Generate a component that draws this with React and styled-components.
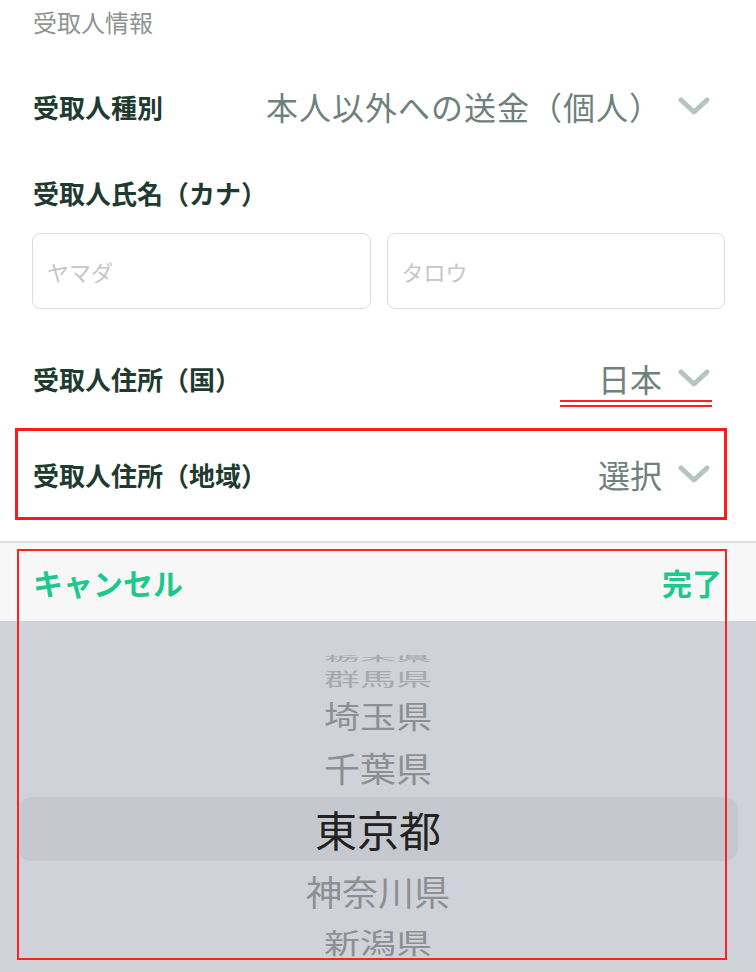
import React from 'react';
import styled, { createGlobalStyle } from 'styled-components';

const GlobalStyle = createGlobalStyle`
  html, body {
    margin: 0;
    padding: 0;
    background: #ffffff;
  }
  body {
    font-family: "Noto Sans CJK JP", "Noto Sans", sans-serif;
  }
`;

const Page = styled.div`
  width: 756px;
  height: 972px;
  overflow: hidden;
  display: flex;
  flex-direction: column;
  background: #ffffff;
`;

// ヘッダー
const SectionTitle = styled.div`
  height: 42px;
  padding-left: 33px;
  display: flex;
  align-items: center;
  font-size: 24px;
  color: #8c9491;
`;

// 行（ラベル + 値）
const Row = styled.div`
  height: ${p => p.$h || 76}px;
  margin: ${p => p.$margin || '0'};
  padding: 0 ${p => (p.$boxed ? 14 : 46)}px 0 ${p => (p.$boxed ? 15 : 33)}px;
  display: flex;
  align-items: center;
  justify-content: space-between;
  border: ${p => (p.$boxed ? '3px solid #ff1a1a' : 'none')};
  box-sizing: border-box;
`;

const Label = styled.div`
  font-size: 26px;
  font-weight: 700;
  color: #1f3b30;
`;

const ValueGroup = styled.div`
  position: relative;
  display: flex;
  align-items: center;
  gap: 16px;
  padding-left: ${p => p.$pad || 0}px;

  ${p => p.$marked && `
    &::after {
      content: '';
      position: absolute;
      left: 0;
      right: -2px;
      bottom: -6px;
      height: 7px;
      border-top: 2px solid #ff2020;
      border-bottom: 2px solid #ff2020;
      box-sizing: border-box;
    }
  `}
`;

const Value = styled.span`
  font-size: 32px;
  color: #6f817c;
  letter-spacing: ${p => p.$spacing || 0}px;
`;

const NameLabel = styled.div`
  height: 44px;
  margin-top: 26px;
  padding-left: 33px;
  display: flex;
  align-items: center;
`;

const InputRow = styled.div`
  margin: 19px 31px 0 32px;
  display: grid;
  grid-template-columns: 1fr 1fr;
  gap: 16px;
`;

const TextInput = styled.input`
  height: 76px;
  box-sizing: border-box;
  border: 1.5px solid #dcdcdc;
  border-radius: 8px;
  padding: 0 14px;
  font-family: "Noto Sans CJK JP", sans-serif;
  font-size: 22px;
  outline: none;

  &::placeholder {
    color: #c6c6c6;
  }
`;

// ピッカー
const Sheet = styled.div`
  position: relative;
  margin-top: 21px;
  border-top: 2px solid #dcdcdc;
  display: flex;
  flex-direction: column;
  flex: 1;
`;

const Toolbar = styled.div`
  height: 78px;
  background: #f7f7f7;
  padding: 0 34px 0 33px;
  display: flex;
  align-items: center;
  justify-content: space-between;
`;

const ToolButton = styled.span`
  font-size: 30px;
  font-weight: 700;
  color: #1cc98c;
`;

const Wheel = styled.div`
  flex: 1;
  background: #cfd2d9;
  padding-top: 32px;
  display: flex;
  flex-direction: column;
`;

const WheelItem = styled.div`
  height: ${p => p.$h}px;
  margin: 0 ${p => (p.$selected ? 18 : 0)}px;
  border-radius: 14px;
  background: ${p => (p.$selected ? '#c5c8cf' : 'transparent')};
  display: flex;
  align-items: center;
  justify-content: center;
  overflow: visible;
`;

const WheelText = styled.span`
  display: inline-block;
  font-size: ${p => (p.$selected ? 42 : 36)}px;
  line-height: 1;
  color: ${p => (p.$selected ? '#222222' : p.$fade ? '#a7a9ad' : '#8d8f93')};
  transform: scaleY(${p => p.$scale});
`;

const Annotation = styled.div`
  position: absolute;
  top: 6px;
  left: 17px;
  width: 710px;
  height: 411px;
  border: 2px solid #ff2020;
  box-sizing: border-box;
  pointer-events: none;
`;

const Chevron = () => (
  <svg width="32" height="20" viewBox="0 0 32 20">
    <path d="M3 4 L16 16 L29 4" fill="none" stroke="#b5c5c0" strokeWidth="5" strokeLinecap="round" strokeLinejoin="round" />
  </svg>
);

const prefectures = [
  { name: '栃木県', h: 10, scale: 0.2, fade: true },
  { name: '群馬県', h: 30, scale: 0.52, fade: true },
  { name: '埼玉県', h: 44, scale: 0.84 },
  { name: '千葉県', h: 60, scale: 0.95 },
  { name: '東京都', h: 64, scale: 1, selected: true },
  { name: '神奈川県', h: 58, scale: 0.97 },
  { name: '新潟県', h: 44, scale: 0.8 },
];

export default function App() {
  return (
    <>
      <GlobalStyle />
      <Page>
        <SectionTitle>受取人情報</SectionTitle>

        <Row $margin="26px 0 0 0">
          <Label>受取人種別</Label>
          <ValueGroup>
            <Value $spacing={1}>本人以外への送金（個人）</Value>
            <Chevron />
          </ValueGroup>
        </Row>

        <NameLabel>
          <Label>受取人氏名（カナ）</Label>
        </NameLabel>
        <InputRow>
          <TextInput placeholder="ヤマダ" />
          <TextInput placeholder="タロウ" />
        </InputRow>

        <Row $margin="31px 0 0 0">
          <Label>受取人住所（国）</Label>
          <ValueGroup $pad={38} $marked>
            <Value>日本</Value>
            <Chevron />
          </ValueGroup>
        </Row>

        <Row $boxed $h={92} $margin="12px 29px 0 15px">
          <Label>受取人住所（地域）</Label>
          <ValueGroup>
            <Value>選択</Value>
            <Chevron />
          </ValueGroup>
        </Row>

        <Sheet>
          <Toolbar>
            <ToolButton>キャンセル</ToolButton>
            <ToolButton>完了</ToolButton>
          </Toolbar>
          <Wheel>
            {prefectures.map(p => (
              <WheelItem key={p.name} $h={p.h} $selected={p.selected}>
                <WheelText $scale={p.scale} $selected={p.selected} $fade={p.fade}>
                  {p.name}
                </WheelText>
              </WheelItem>
            ))}
          </Wheel>
          <Annotation />
        </Sheet>
      </Page>
    </>
  );
}
